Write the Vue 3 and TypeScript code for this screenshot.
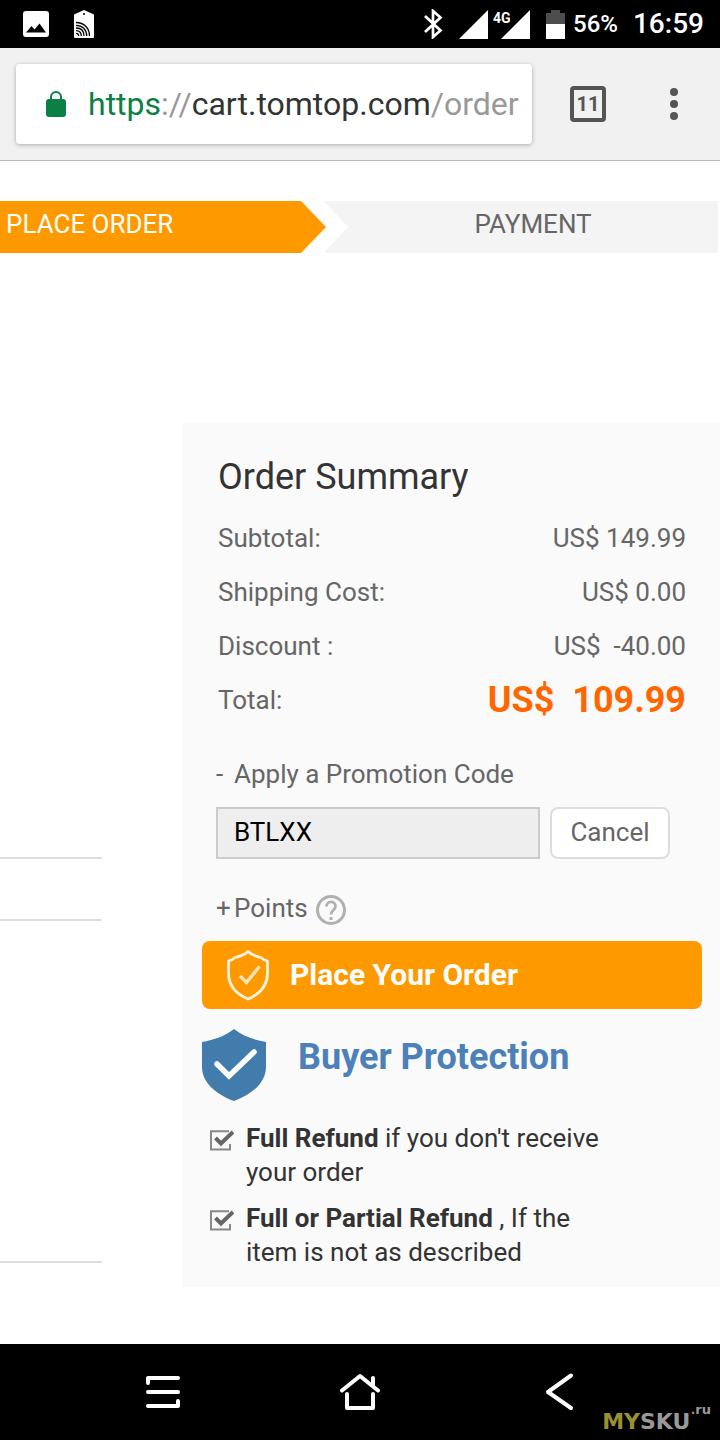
<script setup lang="ts">
import { ref } from 'vue'

interface Amount {
  label: string
  value: string
  total?: boolean
}

interface Guarantee {
  title: string
  text: string
}

const amounts: Amount[] = [
  { label: 'Subtotal:', value: 'US$ 149.99' },
  { label: 'Shipping Cost:', value: 'US$ 0.00' },
  { label: 'Discount :', value: 'US$  -40.00' },
  { label: 'Total:', value: 'US$  109.99', total: true },
]

const guarantees: Guarantee[] = [
  { title: 'Full Refund', text: " if you don't receive your order" },
  { title: 'Full or Partial Refund', text: ' , If the item is not as described' },
]

const promoCode = ref('BTLXX')
</script>

<template>
  <div class="screen">
    <div class="status">
      <div class="status-group left">
        <svg width="26" height="26" viewBox="0 0 26 26" aria-hidden="true">
          <rect width="26" height="26" rx="3" fill="#fff" />
          <path d="M3 21.500L8.500 15L11.500 18.500L16.500 12.500L23 21.500Z" fill="#000" />
        </svg>
        <svg width="20" height="28" viewBox="0 0 20 28" aria-hidden="true">
          <path d="M0 4.500L10 0L20 4.500V27Q20 28 19 28H1Q0 28 0 27Z" fill="#fff" />
          <circle cx="10" cy="4" r="1" fill="#000" />
          <g fill="none" stroke="#000" stroke-width="1.300">
            <path d="M2 12.500C10 12.500 15.500 18 15.500 26" />
            <path d="M2 15.300C8.500 15.300 12.700 19.500 12.700 26" />
            <path d="M2 18C7 18 10 21 10 26" />
            <path d="M2 20.700C5.500 20.700 7.300 22.500 7.300 26" />
            <path d="M2 23.300C3.800 23.300 4.700 24.200 4.700 26" />
          </g>
        </svg>
      </div>
      <div class="status-group right">
        <svg width="20" height="30" viewBox="0 0 20 30" aria-hidden="true">
          <path d="M2 7L17.500 21.500L10 28V2L17.500 8.500L2 23" fill="none" stroke="#fff" stroke-width="2.700" />
        </svg>
        <svg class="signal" width="29" height="29" viewBox="0 0 29 29" aria-hidden="true">
          <path d="M0 29H29V0Z" fill="#fff" />
        </svg>
        <span class="mobile">
          <svg width="29" height="29" viewBox="0 0 29 29" aria-hidden="true">
            <path d="M0 29H29V0Z" fill="#fff" />
          </svg>
          <span class="network">4G</span>
        </span>
        <svg class="battery" width="19" height="29" viewBox="0 0 19 29" aria-hidden="true">
          <path d="M0 3H5V0H14V3H19V14H0Z" fill="#4d4d4d" />
          <path d="M0 14H19V29H0Z" fill="#fff" />
        </svg>
        <span class="percent">56%</span>
        <span class="clock">16:59</span>
      </div>
    </div>

    <header class="toolbar">
      <button class="address" type="button">
        <svg width="20" height="26" viewBox="0 0 20 26" aria-hidden="true">
          <rect y="8" width="20" height="18" rx="3" fill="#0b8043" />
          <path d="M5 9V6A5 5 0 0 1 15 6V9" fill="none" stroke="#0b8043" stroke-width="2" />
        </svg>
        <span class="url"><span class="secure">https</span>://<span class="host">cart.tomtop.com</span>/order</span>
      </button>
      <button class="tabs" type="button">11</button>
      <button class="menu" type="button" aria-label="Menu">
        <svg width="8" height="32" viewBox="0 0 8 32" fill="#555">
          <circle cx="4" cy="4" r="4" />
          <circle cx="4" cy="16" r="4" />
          <circle cx="4" cy="28" r="4" />
        </svg>
      </button>
    </header>

    <main class="page">
      <ol class="steps">
        <li class="step current">PLACE ORDER</li>
        <li class="arrow" aria-hidden="true">
          <svg width="48" height="52" viewBox="0 0 48 52">
            <path d="M24 0H48V52H24L48 26Z" fill="#f4f4f4" />
            <path d="M0 0H1L26 26L1 52H0Z" fill="#ff9900" />
          </svg>
        </li>
        <li class="step">PAYMENT</li>
      </ol>

      <div class="columns">
        <div class="details">
          <div class="block first"></div>
          <div class="block second"></div>
          <div class="block third"></div>
        </div>

        <section class="summary">
          <h1>Order Summary</h1>
          <dl class="amounts">
            <div v-for="row in amounts" :key="row.label" class="amount">
              <dt>{{ row.label }}</dt>
              <dd :class="{ total: row.total }">{{ row.value }}</dd>
            </div>
          </dl>

          <label class="toggle promo-label" for="promo"><span class="sign">-</span>Apply a Promotion Code</label>
          <div class="promo">
            <input id="promo" v-model="promoCode" type="text" />
            <button type="button">Cancel</button>
          </div>

          <div class="toggle points">
            <span class="sign">+</span>Points
            <button class="help" type="button" aria-label="Help">
              <svg width="30" height="30" viewBox="0 0 30 30" fill="none" stroke="#b0b0b0">
                <circle cx="15" cy="15" r="13.500" stroke-width="3" />
                <path d="M10.500 11.500C10.500 5.500 19.500 5.500 19.500 11.300C19.500 15 15 15 15 19.500" stroke-width="2.800" />
                <path d="M15 22V25" stroke-width="3" />
              </svg>
            </button>
          </div>

          <button class="place" type="button">
            <svg width="44" height="52" viewBox="0 0 44 52" fill="none" stroke="#fff3df">
              <path d="M22 2.500C18 6.500 13 7.500 9 8.500C7 11 5 11.500 2.500 12V24C2.500 36 10 45 22 50C34 45 41.500 36 41.500 24V12C39 11.500 37 11 35 8.500C31 7.500 26 6.500 22 2.500Z" stroke-width="2.800" stroke-linejoin="round" />
              <path d="M14 27L20.500 33.500L33.500 17.500" stroke-width="3.500" stroke="#ffe3b8" />
            </svg>
            <span>Place Your Order</span>
          </button>

          <div class="protection">
            <svg width="64" height="72" viewBox="0 0 64 72" aria-hidden="true">
              <path d="M32 0C23 7 12 11 0 13V38C0 53 13 65 32 72C51 65 64 53 64 38V13C52 11 41 7 32 0Z" fill="#427cac" />
              <path d="M15 35L27 47L52 23" fill="none" stroke="#fff" stroke-width="5.500" stroke-linecap="round" />
            </svg>
            <h2>Buyer Protection</h2>
          </div>

          <ul class="guarantees">
            <li v-for="item in guarantees" :key="item.title">
              <svg width="24" height="21" viewBox="0 0 24 21" fill="none" aria-hidden="true">
                <path d="M19 1.200H1V19.500H20V14" stroke="#888" stroke-width="2" />
                <path d="M5.500 8L11 13.500L23 2" stroke="#666" stroke-width="4" />
              </svg>
              <p><strong>{{ item.title }}</strong>{{ item.text }}</p>
            </li>
          </ul>
        </section>
      </div>
    </main>

    <nav class="system">
      <button type="button" aria-label="Recent apps">
        <svg width="40" height="40" viewBox="0 0 40 40">
          <path d="M5 11V6H35M5 20H35M5 34H35V29" />
        </svg>
      </button>
      <button type="button" aria-label="Home">
        <svg width="40" height="40" viewBox="0 0 40 40">
          <path d="M2 18.500L20 4L38 18.500M33 13V6M7 22V36H33V22" />
        </svg>
      </button>
      <button type="button" aria-label="Back">
        <svg width="40" height="40" viewBox="0 0 40 40">
          <path d="M34 3.500L11 20L34 36" />
        </svg>
      </button>
      <div class="watermark"><span class="gold">MY</span>SKU<sup><span class="gold">.</span>ru</sup></div>
    </nav>
  </div>
</template>

<style>
body {
  margin: 0;
  background: #fff;
}
</style>

<style scoped>
.screen {
  display: flex;
  flex-direction: column;
  min-height: 100vh;
  font-family: Roboto, sans-serif;
  font-size: 26px;
  line-height: 34px;
  color: #666;
  background: #fff;
}

svg {
  display: block;
  flex: none;
}

button {
  margin: 0;
  padding: 0;
  border: 0;
  background: none;
  font: inherit;
  color: inherit;
  cursor: pointer;
}

h1,
h2,
p,
dl,
dd,
ol,
ul {
  margin: 0;
  padding: 0;
  list-style: none;
}

.status {
  display: flex;
  justify-content: space-between;
  height: 48px;
  padding: 0 16px 0 23px;
  background: #000;
  color: #fff;
  font-weight: 500;
}

.status-group {
  display: flex;
  align-items: center;
}

.left {
  gap: 25px;
}

.signal {
  margin-left: 16px;
}

.mobile {
  position: relative;
  margin-left: 13px;
}

.network {
  position: absolute;
  left: -8px;
  top: 0;
  font-size: 14px;
  line-height: 16px;
  font-weight: 700;
}

.battery {
  margin-left: 16px;
}

.percent {
  margin-left: 8px;
  font-size: 24px;
}

.clock {
  margin-left: 15px;
  font-size: 28px;
}

.toolbar {
  display: flex;
  align-items: center;
  height: 112px;
  padding: 0 16px;
  background: #f1f1f1;
  border-bottom: 1px solid #b8b8b8;
}

.address {
  display: flex;
  align-items: center;
  flex: 1;
  gap: 22px;
  min-width: 0;
  height: 80px;
  padding: 0 12px 0 30px;
  border-radius: 4px;
  background: #fff;
  box-shadow: 0 1px 4px rgba(0, 0, 0, 0.3);
}

.url {
  font-size: 32px;
  line-height: 40px;
  color: #999;
  white-space: nowrap;
}

.secure {
  color: #0b8043;
}

.host {
  color: #333;
}

.tabs {
  flex: none;
  width: 36px;
  height: 36px;
  margin-left: 38px;
  border: 4px solid #555;
  border-radius: 4px;
  color: #555;
  font-size: 20px;
  line-height: 28px;
  font-weight: 700;
}

.menu {
  display: flex;
  flex: none;
  justify-content: center;
  width: 60px;
  margin-left: 38px;
}

.page {
  flex: 1;
  padding-top: 40px;
}

.steps {
  display: flex;
  height: 52px;
  margin-right: 2px;
  line-height: 46px;
}

.step {
  flex: 370;
  background: #f4f4f4;
  text-align: center;
}

.current {
  flex: 300;
  background: #ff9900;
  color: #fff;
  text-align: left;
  text-indent: 6px;
}

.columns {
  display: flex;
  gap: 80px;
  margin-top: 170px;
}

.details {
  flex: none;
  width: 102px;
}

.block {
  border-bottom: 2px solid #ddd;
}

.first {
  height: 434px;
}

.second {
  height: 60px;
}

.third {
  height: 340px;
}

.summary {
  flex: 1;
  min-width: 0;
  padding: 32px 18px 18px 20px;
  background: #fafafa;
}

h1 {
  margin: 0 16px 12px;
  font-size: 36px;
  line-height: 44px;
  font-weight: 400;
  color: #333;
}

.amounts {
  padding: 0 16px;
}

.amount {
  display: flex;
  justify-content: space-between;
  line-height: 54px;
}

.amount dd {
  white-space: pre;
}

.amount .total {
  color: #ff6600;
  font-size: 36px;
  font-weight: 700;
}

.toggle {
  display: flex;
  padding-left: 14px;
}

.sign {
  width: 18px;
}

.promo-label {
  margin-top: 30px;
}

.promo {
  display: flex;
  gap: 10px;
  margin-top: 16px;
  padding: 0 32px 0 14px;
}

.promo input {
  flex: 1;
  min-width: 0;
  box-sizing: border-box;
  height: 52px;
  padding: 0 16px 2px;
  border: 2px solid #ccc;
  border-radius: 0;
  background: #eee;
  color: #000;
  font: inherit;
}

.promo button {
  width: 120px;
  padding-bottom: 2px;
  border: 2px solid #ddd;
  border-radius: 8px;
  background: #fff;
}

.points {
  margin-top: 32px;
}

.help {
  display: flex;
  align-items: flex-end;
  margin-left: 8px;
}

.place {
  display: flex;
  align-items: center;
  gap: 20px;
  width: 100%;
  height: 68px;
  margin-top: 16px;
  padding-left: 24px;
  border-radius: 8px;
  background: #ff9900;
  color: #fff;
  font-size: 30px;
  font-weight: 700;
}

.protection {
  display: flex;
  gap: 32px;
  margin-top: 20px;
}

h2 {
  font-size: 36px;
  line-height: 56px;
  font-weight: 700;
  color: #4b80b9;
}

.guarantees {
  display: flex;
  flex-direction: column;
  gap: 12px;
  margin-top: 20px;
  padding: 0 90px 0 8px;
  color: #333;
}

.guarantees li {
  display: flex;
  gap: 12px;
}

.guarantees svg {
  margin-top: 9px;
}

.system {
  position: relative;
  display: flex;
  align-items: center;
  justify-content: space-around;
  height: 96px;
  padding: 0 65px;
  background: #000;
}

.system svg {
  fill: none;
  stroke: #fff;
  stroke-width: 4;
  stroke-linecap: round;
  stroke-linejoin: round;
}

.watermark {
  position: absolute;
  right: 9px;
  bottom: 2px;
  font-family: "DejaVu Sans", sans-serif;
  font-size: 22px;
  line-height: 32px;
  color: #999;
  font-weight: 700;
}

.watermark sup {
  font-size: 13px;
  line-height: 0;
  vertical-align: 15px;
}

.gold {
  color: #99902f;
}
</style>
